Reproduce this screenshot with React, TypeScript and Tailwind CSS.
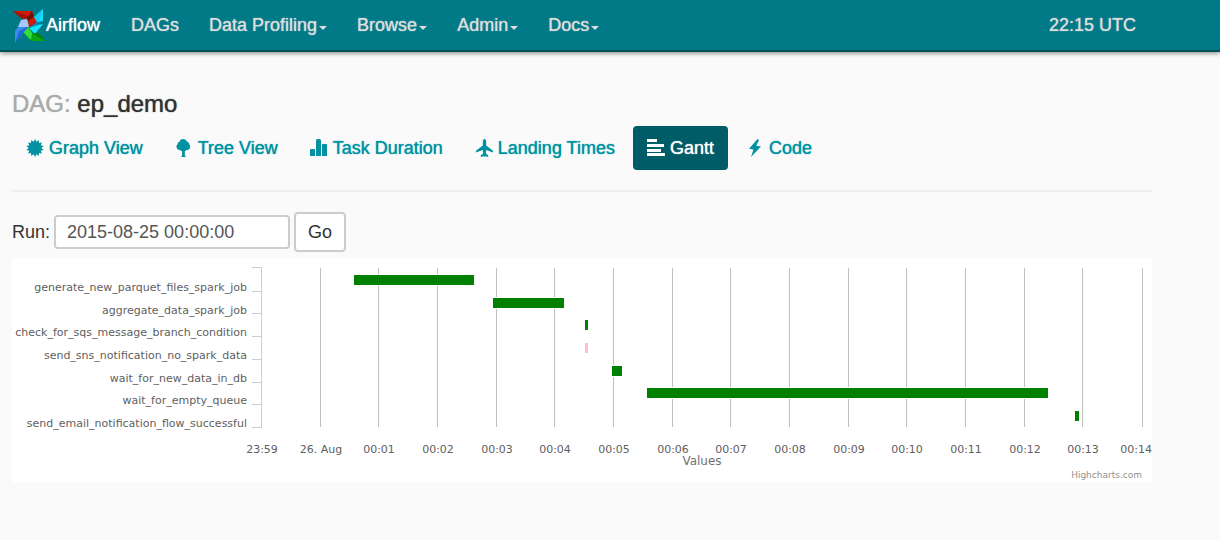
import React from "react";

interface Task {
  name: string;
  start: number;
  width: number;
  y: number;
  color: string;
  labelY: number;
}

const NAV_MENUS = ["Data Profiling", "Browse", "Admin", "Docs"];

const TASKS: Task[] = [
  { name: "generate_new_parquet_files_spark_job", start: 342, width: 120, y: 17, color: "#008000", labelY: 33 },
  { name: "aggregate_data_spark_job", start: 481, width: 71, y: 40, color: "#008000", labelY: 56 },
  { name: "check_for_sqs_message_branch_condition", start: 573, width: 3, y: 62, color: "#008000", labelY: 78 },
  { name: "send_sns_notification_no_spark_data", start: 573, width: 3, y: 85, color: "#ffc0cb", labelY: 101 },
  { name: "wait_for_new_data_in_db", start: 600, width: 10, y: 108, color: "#008000", labelY: 124 },
  { name: "wait_for_empty_queue", start: 635, width: 401, y: 130, color: "#008000", labelY: 146 },
  { name: "send_email_notification_flow_successful", start: 1063, width: 4, y: 153, color: "#008000", labelY: 169 },
];

const ROW_TICKS = [9, 33, 55, 78, 101, 124, 146, 169];

const TIME_TICKS = [
  { x: 308, label: "26. Aug" },
  { x: 366, label: "00:01" },
  { x: 425, label: "00:02" },
  { x: 484, label: "00:03" },
  { x: 542, label: "00:04" },
  { x: 601, label: "00:05" },
  { x: 660, label: "00:06" },
  { x: 718, label: "00:07" },
  { x: 777, label: "00:08" },
  { x: 836, label: "00:09" },
  { x: 894, label: "00:10" },
  { x: 953, label: "00:11" },
  { x: 1012, label: "00:12" },
  { x: 1070, label: "00:13" },
];

// 14 spikes around the centre of an 18x18 box
const CERTIFICATE_POINTS = Array.from({ length: 28 }, (_, i) => {
  const r = i % 2 === 0 ? 8.9 : 6.3;
  const a = (i * Math.PI) / 14;
  return `${(9 + r * Math.sin(a)).toFixed(2)},${(9 - r * Math.cos(a)).toFixed(2)}`;
}).join(" ");

const Icon: React.FC<{ children: React.ReactNode }> = ({ children }) => (
  <svg viewBox="0 0 18 18" className="h-[18px] w-[18px] shrink-0 fill-current" aria-hidden="true">
    {children}
  </svg>
);

const VIEWS = [
  { label: "Graph View", icon: <polygon points={CERTIFICATE_POINTS} /> },
  {
    label: "Tree View",
    icon: (
      <path d="M8 0c2 0 3.400 1 3.800 2.400 1.600.3 2.500 1.500 2.300 2.900 1.200.9 1.500 2.600.7 3.900-.7 1.400-2 2-3.300 1.700-.6.8-1.100 1.200-1.700 1.200v4.400h.7V18h-4v-1.500h.6v-4.400c-.8 0-1.300-.4-1.800-1.200-1.400.3-2.700-.3-3.400-1.700-.8-1.300-.5-3 .7-3.900-.2-1.400.7-2.600 2.300-2.900C4.600 1 6 0 8 0z" />
    ),
  },
  {
    label: "Task Duration",
    icon: (
      <>
        <path d="M0 17v-6q0-1 1-1h3q1 0 1 1v6z" />
        <path d="M6 17V1.500q0-1.500 1.500-1.500h2q1.500 0 1.500 1.500V17z" />
        <path d="M12 17V6q0-1 1-1h3q1 0 1 1v11z" />
      </>
    ),
  },
  {
    label: "Landing Times",
    icon: (
      <path d="M9.500 0c.9 0 1.700 1.300 1.700 3v3.500l6.500 5.100c.3.300.3 1.300.3 1.900l-6.800-2.500-.3 3.400 2.300 1.800V18l-3.100-.8-.6.8-.6-.8-3.100.8v-1.800l2.300-1.800-.3-3.400L1 13.500c0-.6 0-1.600.3-1.900l6.500-5.100V3c0-1.700.8-3 1.700-3z" />
    ),
  },
  {
    label: "Gantt",
    active: true,
    icon: <path d="M0 0h10v3H0zM0 5h17v3H0zM0 10h14v3H0zM0 14h18v3H0z" />,
  },
  { label: "Code", icon: <path d="M11.500 0 3 9.700l4.500.9L5 18l10-10.400-4.800-.8L13 1z" /> },
];

const Pinwheel = () => (
  <svg viewBox="0 0 34 36" className="h-9 w-[34px] shrink-0" aria-hidden="true">
    <path d="M1 4h19l2 6 3 5-8 6-1-7-7-3z" fill="#cf1c08" />
    <path d="M1 4l8 7 6 1 2-3z" fill="#a01604" />
    <path d="M20 4l2 6-6 4-1-2z" fill="#6e1204" />
    <path d="M31 2v12l-7 3 1-2-3-5z" fill="#11e0ff" />
    <path d="M31 2l-5 13-2 2 1-2-3-5z" fill="#19c8ee" />
    <path d="M31 14l-14 7 8-6z" fill="#0b7fc0" />
    <path d="M31 17l-8 10-6-6 7-3z" fill="#14e6fa" />
    <path d="M31 17l-14 4 7-3z" fill="#0c9fd0" />
    <path d="M11 25l5-5 4 6h7l6 8H19z" fill="#05a80e" />
    <path d="M20 26h7l6 8z" fill="#068012" />
    <path d="M11 25l5-5 4 6-1 7z" fill="#35dc38" />
    <path d="M3 36V24l4-5h10l-6 7z" fill="#3c8cf2" />
    <path d="M3 36l4-12 10-5-6 7z" fill="#2268d6" />
    <path d="M6 20l3-7 6-1 2 8z" fill="#a6c8fc" />
  </svg>
);

const NavBar = () => (
  <nav className="flex h-[52px] items-center border-b-2 border-[#00505a] bg-[#007a87] pr-[84px] pl-3 text-lg text-[#dddddd] shadow-[0_1px_5px_rgba(0,0,0,0.5)] [text-shadow:0_0_1px_currentColor]">
    <a href="#" className="mr-[31px] flex items-center text-white">
      <Pinwheel />
      Airflow
    </a>
    <ul className="flex items-center gap-[30px]">
      <li>
        <a href="#">DAGs</a>
      </li>
      {NAV_MENUS.map((menu) => (
        <li key={menu}>
          <button type="button" className="flex items-center gap-0.5 [text-shadow:0_0_1px_currentColor]">
            {menu}
            <span className="mt-1.5 border-x-4 border-t-4 border-x-transparent border-t-current" />
          </button>
        </li>
      ))}
    </ul>
    <span className="ml-auto">22:15 UTC</span>
  </nav>
);

const GanttChart = () => (
  <svg
    viewBox="0 0 1140 224"
    className="block w-full bg-white font-['DejaVu_Sans',sans-serif] text-[11px]"
    role="img"
    aria-label="Task run times"
  >
    {/* Grid */}
    <g fill="#c0c0c0">
      {TIME_TICKS.map((tick) => (
        <rect key={tick.x} x={tick.x} y={10} width={1} height={159} />
      ))}
      <rect x={1130} y={10} width={1} height={159} />
    </g>

    {/* Task axis */}
    <g fill="#c0d0e0">
      <rect x={249} y={9} width={1} height={161} />
      {ROW_TICKS.map((y) => (
        <rect key={y} x={240} y={y} width={10} height={1} />
      ))}
    </g>

    {TASKS.map((task) => (
      <g key={task.name}>
        <rect x={task.start - 1} y={task.y - 1} width={task.width + 2} height={12} fill="#ffffff" />
        <rect x={task.start} y={task.y} width={task.width} height={10} fill={task.color} />
        <text x={235} y={task.labelY} textAnchor="end" fill="#606060">
          {task.name}
        </text>
      </g>
    ))}

    <g fill="#606060" textAnchor="middle">
      <text x={250} y={195}>23:59</text>
      {TIME_TICKS.map((tick) => (
        <text key={tick.x} x={tick.x + 1} y={195}>
          {tick.label}
        </text>
      ))}
      <text x={1140} y={195} textAnchor="end">00:14</text>
    </g>
    <text x={690} y={207} textAnchor="middle" fill="#707070" className="text-xs">
      Values
    </text>
    <text x={1130} y={220} textAnchor="end" fill="#909090" className="text-[9px]">
      Highcharts.com
    </text>
  </svg>
);

export default function App() {
  return (
    <div className="min-h-screen bg-[#fafafa] font-['Liberation_Sans',Arial,sans-serif] text-lg text-[#333333]">
      <NavBar />

      <main className="mr-[68px] ml-3 pt-9">
        <h1 className="text-2xl [text-shadow:0_0_1px_currentColor]">
          <span className="text-[#aaaaaa] [text-shadow:0_0_1px_currentColor]">DAG:</span> ep_demo
        </h1>

        <ul className="mt-1.5 flex gap-1">
          {VIEWS.map((view) => (
            <li key={view.label}>
              <a
                href="#"
                className={
                  view.active
                    ? "flex h-11 items-center gap-[5px] rounded bg-[#005c66] px-3.5 text-white [text-shadow:0_0_1px_currentColor]"
                    : "flex h-11 items-center gap-[5px] rounded px-3.5 text-[#0092a1] [text-shadow:0_0_1px_currentColor]"
                }
              >
                <Icon>{view.icon}</Icon>
                {view.label}
              </a>
            </li>
          ))}
        </ul>

        <hr className="mt-5 border-t-2 border-[#eeeeee]" />

        <form className="mt-5 mb-1.5 flex items-center gap-1" onSubmit={(e) => e.preventDefault()}>
          <label htmlFor="run">Run:</label>
          <input
            id="run"
            type="text"
            defaultValue="2015-08-25 00:00:00"
            className="h-[34px] w-[236px] rounded border-2 border-[#cccccc] bg-white px-[11px] text-[#555555]"
          />
          <button type="submit" className="h-10 rounded border-2 border-[#cccccc] bg-white px-3">
            Go
          </button>
        </form>

        <GanttChart />
      </main>
    </div>
  );
}
